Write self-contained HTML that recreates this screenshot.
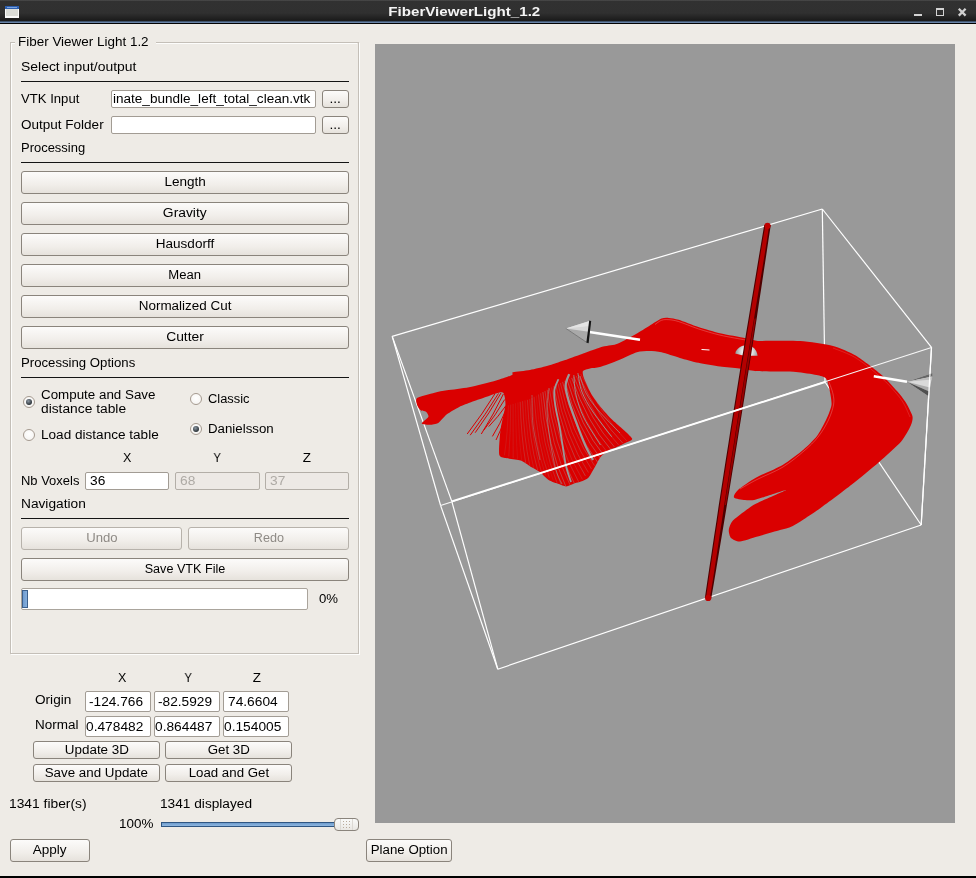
<!DOCTYPE html>
<html><head><meta charset="utf-8"><style>
html,body{margin:0;padding:0;}
body{width:976px;height:878px;position:relative;overflow:hidden;background:#eeebe6;font-family:"Liberation Sans",sans-serif;}
.t{position:absolute;white-space:nowrap;will-change:transform;}
.r{position:absolute;}
</style></head><body>
<div class="r" style="left:0px;top:0px;width:976px;height:24px;background:linear-gradient(#444 0px,#454545 1px,#313131 1px,#303030 13px,#1c1c1c 20px,#1b1b1b 21px,#3f536d 21px,#3f536d 22px,#6882a6 22px,#6882a6 23px,#030303 23px,#000 24px)"></div>
<div class="t" style="left:398.74px;top:5.20px;font-size:13px;line-height:13px;color:#f4f4f4;font-weight:bold;transform:scaleX(1.1646);transform-origin:50% 0">FiberViewerLight_1.2</div>
<div class="r" style="left:5px;top:6px;width:14px;height:12px;background:#fafafa"></div>
<div class="r" style="left:6px;top:9px;width:12px;height:7px;background:#dcddd8"></div>
<div class="r" style="left:5px;top:6px;width:14px;height:3px;background:#2c5eae"></div>
<div class="r" style="left:7px;top:7px;width:10px;height:1px;background:#79a2df"></div>
<div class="r" style="left:914px;top:14px;width:8px;height:2px;background:#d4d4d4"></div>
<div class="r" style="left:936px;top:8px;width:8px;height:8px;box-sizing:border-box;border:1px solid #d4d4d4;border-top:2px solid #d4d4d4"></div>
<svg class="r" style="left:957px;top:7px" width="11" height="11"><path d="M1.8 1.8 L8.6 8.6 M8.6 1.8 L1.8 8.6" stroke="#d0d0d0" stroke-width="2.3" stroke-linecap="butt"/></svg>
<div class="r" style="left:10px;top:42px;width:349px;height:612px;box-sizing:border-box;border:1px solid #c4bfb8;border-right-color:#c4bfb8"></div>
<div class="r" style="left:11px;top:43px;width:349px;height:612px;box-sizing:border-box;border:1px solid #fdfdfc;border-left:none;border-top:none"></div>
<div class="r" style="left:11px;top:43px;width:1px;height:610px;background:#fdfdfc"></div>
<div class="r" style="left:11px;top:43px;width:346px;height:1px;background:#fdfdfc"></div>
<div class="r" style="left:15px;top:34px;width:141px;height:14px;background:#eeebe6"></div>
<div class="t" style="left:17.60px;top:36.42px;font-size:12.5px;line-height:12.5px;color:#000;font-weight:normal;transform:scaleX(1.0761);transform-origin:0 0">Fiber Viewer Light 1.2</div>
<div class="t" style="left:20.60px;top:61.42px;font-size:12.5px;line-height:12.5px;color:#000;font-weight:normal;transform:scaleX(1.1142);transform-origin:0 0">Select input/output</div>
<div class="r" style="left:21px;top:81px;width:328px;height:1px;background:#141414"></div>
<div class="t" style="left:20.60px;top:93.42px;font-size:12.5px;line-height:12.5px;color:#000;font-weight:normal;transform:scaleX(1.0491);transform-origin:0 0">VTK Input</div>
<div class="r" style="left:111px;top:90px;width:205px;height:18px;box-sizing:border-box;border:1px solid #a29c94;border-radius:2px;background:#fff"></div>
<div class="t" style="left:112.60px;top:93.42px;font-size:12.5px;line-height:12.5px;color:#000;font-weight:normal;transform:scaleX(1.0837);transform-origin:0 0">inate_bundle_left_total_clean.vtk</div>
<div class="r" style="left:322px;top:90px;width:27px;height:18px;box-sizing:border-box;border:1px solid #8a847c;border-radius:3px;background:linear-gradient(#fcfbfa,#f1eeea 60%,#e6e2dc)"></div>
<div class="t" style="left:330.29px;top:93.42px;font-size:12.5px;line-height:12.5px;color:#000;font-weight:normal;transform:scaleX(1.0979);transform-origin:50% 0">...</div>
<div class="t" style="left:20.60px;top:119.42px;font-size:12.5px;line-height:12.5px;color:#000;font-weight:normal;transform:scaleX(1.0812);transform-origin:0 0">Output Folder</div>
<div class="r" style="left:111px;top:116px;width:205px;height:18px;box-sizing:border-box;border:1px solid #a29c94;border-radius:2px;background:#fff"></div>
<div class="r" style="left:322px;top:116px;width:27px;height:18px;box-sizing:border-box;border:1px solid #8a847c;border-radius:3px;background:linear-gradient(#fcfbfa,#f1eeea 60%,#e6e2dc)"></div>
<div class="t" style="left:330.29px;top:119.42px;font-size:12.5px;line-height:12.5px;color:#000;font-weight:normal;transform:scaleX(1.0979);transform-origin:50% 0">...</div>
<div class="t" style="left:20.60px;top:142.42px;font-size:12.5px;line-height:12.5px;color:#000;font-weight:normal;transform:scaleX(1.0366);transform-origin:0 0">Processing</div>
<div class="r" style="left:21px;top:162px;width:328px;height:1px;background:#141414"></div>
<div class="r" style="left:21px;top:171px;width:328px;height:23px;box-sizing:border-box;border:1px solid #8a847c;border-radius:3px;background:linear-gradient(#fcfbfa,#f1eeea 60%,#e6e2dc)"></div>
<div class="t" style="left:165.89px;top:175.92px;font-size:12.5px;line-height:12.5px;color:#000;font-weight:normal;transform:scaleX(1.0835);transform-origin:50% 0">Length</div>
<div class="r" style="left:21px;top:202px;width:328px;height:23px;box-sizing:border-box;border:1px solid #8a847c;border-radius:3px;background:linear-gradient(#fcfbfa,#f1eeea 60%,#e6e2dc)"></div>
<div class="t" style="left:165.21px;top:206.92px;font-size:12.5px;line-height:12.5px;color:#000;font-weight:normal;transform:scaleX(1.1076);transform-origin:50% 0">Gravity</div>
<div class="r" style="left:21px;top:233px;width:328px;height:23px;box-sizing:border-box;border:1px solid #8a847c;border-radius:3px;background:linear-gradient(#fcfbfa,#f1eeea 60%,#e6e2dc)"></div>
<div class="t" style="left:158.02px;top:237.92px;font-size:12.5px;line-height:12.5px;color:#000;font-weight:normal;transform:scaleX(1.0826);transform-origin:50% 0">Hausdorff</div>
<div class="r" style="left:21px;top:264px;width:328px;height:23px;box-sizing:border-box;border:1px solid #8a847c;border-radius:3px;background:linear-gradient(#fcfbfa,#f1eeea 60%,#e6e2dc)"></div>
<div class="t" style="left:169.37px;top:268.92px;font-size:12.5px;line-height:12.5px;color:#000;font-weight:normal;transform:scaleX(1.0465);transform-origin:50% 0">Mean</div>
<div class="r" style="left:21px;top:295px;width:328px;height:23px;box-sizing:border-box;border:1px solid #8a847c;border-radius:3px;background:linear-gradient(#fcfbfa,#f1eeea 60%,#e6e2dc)"></div>
<div class="t" style="left:141.93px;top:299.92px;font-size:12.5px;line-height:12.5px;color:#000;font-weight:normal;transform:scaleX(1.0748);transform-origin:50% 0">Normalized Cut</div>
<div class="r" style="left:21px;top:326px;width:328px;height:23px;box-sizing:border-box;border:1px solid #8a847c;border-radius:3px;background:linear-gradient(#fcfbfa,#f1eeea 60%,#e6e2dc)"></div>
<div class="t" style="left:167.98px;top:330.92px;font-size:12.5px;line-height:12.5px;color:#000;font-weight:normal;transform:scaleX(1.1082);transform-origin:50% 0">Cutter</div>
<div class="t" style="left:20.60px;top:357.42px;font-size:12.5px;line-height:12.5px;color:#000;font-weight:normal;transform:scaleX(1.0539);transform-origin:0 0">Processing Options</div>
<div class="r" style="left:21px;top:377px;width:328px;height:1px;background:#141414"></div>
<div class="r" style="left:23px;top:396px;width:12px;height:12px;box-sizing:border-box;border:1px solid #a59a90;border-radius:50%;background:radial-gradient(circle at 50% 40%,#fff,#f3f1ee)"></div>
<div class="r" style="left:26px;top:399px;width:6px;height:6px;border-radius:50%;background:radial-gradient(circle at 40% 35%,#8c98a4,#2c3338 70%)"></div>
<div class="t" style="left:40.60px;top:389.42px;font-size:12.5px;line-height:12.5px;color:#000;font-weight:normal;transform:scaleX(1.0695);transform-origin:0 0">Compute and Save</div>
<div class="t" style="left:40.60px;top:403.42px;font-size:12.5px;line-height:12.5px;color:#000;font-weight:normal;transform:scaleX(1.1030);transform-origin:0 0">distance table</div>
<div class="r" style="left:23px;top:429px;width:12px;height:12px;box-sizing:border-box;border:1px solid #a59a90;border-radius:50%;background:radial-gradient(circle at 50% 40%,#fff,#f3f1ee)"></div>
<div class="t" style="left:40.60px;top:429.42px;font-size:12.5px;line-height:12.5px;color:#000;font-weight:normal;transform:scaleX(1.0857);transform-origin:0 0">Load distance table</div>
<div class="r" style="left:190px;top:393px;width:12px;height:12px;box-sizing:border-box;border:1px solid #a59a90;border-radius:50%;background:radial-gradient(circle at 50% 40%,#fff,#f3f1ee)"></div>
<div class="t" style="left:207.60px;top:393.42px;font-size:12.5px;line-height:12.5px;color:#000;font-weight:normal;transform:scaleX(1.0298);transform-origin:0 0">Classic</div>
<div class="r" style="left:190px;top:423px;width:12px;height:12px;box-sizing:border-box;border:1px solid #a59a90;border-radius:50%;background:radial-gradient(circle at 50% 40%,#fff,#f3f1ee)"></div>
<div class="r" style="left:193px;top:426px;width:6px;height:6px;border-radius:50%;background:radial-gradient(circle at 40% 35%,#8c98a4,#2c3338 70%)"></div>
<div class="t" style="left:207.60px;top:423.42px;font-size:12.5px;line-height:12.5px;color:#000;font-weight:normal;transform:scaleX(1.0625);transform-origin:0 0">Danielsson</div>
<div class="t" style="left:122.83px;top:452.42px;font-size:12.5px;line-height:12.5px;color:#000;font-weight:normal;transform:scaleX(0.9857);transform-origin:50% 0">X</div>
<div class="t" style="left:212.83px;top:452.42px;font-size:12.5px;line-height:12.5px;color:#000;font-weight:normal;transform:scaleX(0.8789);transform-origin:50% 0">Y</div>
<div class="t" style="left:303.18px;top:452.42px;font-size:12.5px;line-height:12.5px;color:#000;font-weight:normal;transform:scaleX(1.0765);transform-origin:50% 0">Z</div>
<div class="t" style="left:20.60px;top:475.42px;font-size:12.5px;line-height:12.5px;color:#000;font-weight:normal;transform:scaleX(1.0370);transform-origin:0 0">Nb Voxels</div>
<div class="r" style="left:85px;top:472px;width:84px;height:18px;box-sizing:border-box;border:1px solid #a29c94;border-radius:2px;background:#fff"></div>
<div class="t" style="left:89.60px;top:475.42px;font-size:12.5px;line-height:12.5px;color:#000;font-weight:normal;transform:scaleX(1.0992);transform-origin:0 0">36</div>
<div class="r" style="left:175px;top:472px;width:85px;height:18px;box-sizing:border-box;border:1px solid #b3aea7;border-radius:2px;background:#ede9e5"></div>
<div class="t" style="left:179.60px;top:475.42px;font-size:12.5px;line-height:12.5px;color:#aeaaa5;font-weight:normal;transform:scaleX(1.0992);transform-origin:0 0">68</div>
<div class="r" style="left:265px;top:472px;width:84px;height:18px;box-sizing:border-box;border:1px solid #b3aea7;border-radius:2px;background:#ede9e5"></div>
<div class="t" style="left:269.60px;top:475.42px;font-size:12.5px;line-height:12.5px;color:#aeaaa5;font-weight:normal;transform:scaleX(1.0992);transform-origin:0 0">37</div>
<div class="t" style="left:20.60px;top:498.42px;font-size:12.5px;line-height:12.5px;color:#000;font-weight:normal;transform:scaleX(1.0963);transform-origin:0 0">Navigation</div>
<div class="r" style="left:21px;top:518px;width:328px;height:1px;background:#141414"></div>
<div class="r" style="left:21px;top:527px;width:161px;height:23px;box-sizing:border-box;border:1px solid #b7b2ab;border-radius:3px;background:linear-gradient(#fcfbfa,#f1eeea 60%,#e6e2dc)"></div>
<div class="t" style="left:86.56px;top:531.92px;font-size:12.5px;line-height:12.5px;color:#8e8a85;font-weight:normal;transform:scaleX(1.0495);transform-origin:50% 0">Undo</div>
<div class="r" style="left:188px;top:527px;width:161px;height:23px;box-sizing:border-box;border:1px solid #b7b2ab;border-radius:3px;background:linear-gradient(#fcfbfa,#f1eeea 60%,#e6e2dc)"></div>
<div class="t" style="left:253.56px;top:531.92px;font-size:12.5px;line-height:12.5px;color:#8e8a85;font-weight:normal;transform:scaleX(1.0097);transform-origin:50% 0">Redo</div>
<div class="r" style="left:21px;top:558px;width:328px;height:23px;box-sizing:border-box;border:1px solid #8a847c;border-radius:3px;background:linear-gradient(#fcfbfa,#f1eeea 60%,#e6e2dc)"></div>
<div class="t" style="left:145.06px;top:562.92px;font-size:12.5px;line-height:12.5px;color:#000;font-weight:normal;transform:scaleX(1.0089);transform-origin:50% 0">Save VTK File</div>
<div class="r" style="left:21px;top:588px;width:287px;height:22px;box-sizing:border-box;border:1px solid #aaa49c;border-radius:2px;background:#fff"></div>
<div class="r" style="left:22px;top:590px;width:6px;height:18px;box-sizing:border-box;border:1px solid #3b5f8c;background:linear-gradient(90deg,#6f9bcf,#86afdc)"></div>
<div class="t" style="left:318.60px;top:593.42px;font-size:12.5px;line-height:12.5px;color:#000;font-weight:normal;transform:scaleX(1.0543);transform-origin:0 0">0%</div>
<div class="t" style="left:117.83px;top:672.42px;font-size:12.5px;line-height:12.5px;color:#000;font-weight:normal;transform:scaleX(0.9857);transform-origin:50% 0">X</div>
<div class="t" style="left:183.83px;top:672.42px;font-size:12.5px;line-height:12.5px;color:#000;font-weight:normal;transform:scaleX(0.8789);transform-origin:50% 0">Y</div>
<div class="t" style="left:253.18px;top:672.42px;font-size:12.5px;line-height:12.5px;color:#000;font-weight:normal;transform:scaleX(1.0765);transform-origin:50% 0">Z</div>
<div class="t" style="left:34.60px;top:694.42px;font-size:12.5px;line-height:12.5px;color:#000;font-weight:normal;transform:scaleX(1.0882);transform-origin:0 0">Origin</div>
<div class="t" style="left:34.60px;top:719.42px;font-size:12.5px;line-height:12.5px;color:#000;font-weight:normal;transform:scaleX(1.0784);transform-origin:0 0">Normal</div>
<div class="r" style="left:85px;top:691px;width:66px;height:21px;box-sizing:border-box;border:1px solid #a29c94;border-radius:2px;background:#fff"></div>
<div class="t" style="left:88.60px;top:695.92px;font-size:12.5px;line-height:12.5px;color:#000;font-weight:normal;transform:scaleX(1.0941);transform-origin:0 0">-124.766</div>
<div class="r" style="left:154px;top:691px;width:66px;height:21px;box-sizing:border-box;border:1px solid #a29c94;border-radius:2px;background:#fff"></div>
<div class="t" style="left:157.60px;top:695.92px;font-size:12.5px;line-height:12.5px;color:#000;font-weight:normal;transform:scaleX(1.0941);transform-origin:0 0">-82.5929</div>
<div class="r" style="left:223px;top:691px;width:66px;height:21px;box-sizing:border-box;border:1px solid #a29c94;border-radius:2px;background:#fff"></div>
<div class="t" style="left:227.60px;top:695.92px;font-size:12.5px;line-height:12.5px;color:#000;font-weight:normal;transform:scaleX(1.0991);transform-origin:0 0">74.6604</div>
<div class="r" style="left:85px;top:716px;width:66px;height:21px;box-sizing:border-box;border:1px solid #a29c94;border-radius:2px;background:#fff"></div>
<div class="t" style="left:85.60px;top:720.92px;font-size:12.5px;line-height:12.5px;color:#000;font-weight:normal;transform:scaleX(1.0991);transform-origin:0 0">0.478482</div>
<div class="r" style="left:154px;top:716px;width:66px;height:21px;box-sizing:border-box;border:1px solid #a29c94;border-radius:2px;background:#fff"></div>
<div class="t" style="left:154.60px;top:720.92px;font-size:12.5px;line-height:12.5px;color:#000;font-weight:normal;transform:scaleX(1.0991);transform-origin:0 0">0.864487</div>
<div class="r" style="left:223px;top:716px;width:66px;height:21px;box-sizing:border-box;border:1px solid #a29c94;border-radius:2px;background:#fff"></div>
<div class="t" style="left:223.60px;top:720.92px;font-size:12.5px;line-height:12.5px;color:#000;font-weight:normal;transform:scaleX(1.0991);transform-origin:0 0">0.154005</div>
<div class="r" style="left:33px;top:741px;width:127px;height:18px;box-sizing:border-box;border:1px solid #8a847c;border-radius:3px;background:linear-gradient(#fcfbfa,#f1eeea 60%,#e6e2dc)"></div>
<div class="t" style="left:66.62px;top:744.42px;font-size:12.5px;line-height:12.5px;color:#000;font-weight:normal;transform:scaleX(1.0739);transform-origin:50% 0">Update 3D</div>
<div class="r" style="left:165px;top:741px;width:127px;height:18px;box-sizing:border-box;border:1px solid #8a847c;border-radius:3px;background:linear-gradient(#fcfbfa,#f1eeea 60%,#e6e2dc)"></div>
<div class="t" style="left:208.70px;top:744.42px;font-size:12.5px;line-height:12.5px;color:#000;font-weight:normal;transform:scaleX(1.0626);transform-origin:50% 0">Get 3D</div>
<div class="r" style="left:33px;top:764px;width:127px;height:18px;box-sizing:border-box;border:1px solid #8a847c;border-radius:3px;background:linear-gradient(#fcfbfa,#f1eeea 60%,#e6e2dc)"></div>
<div class="t" style="left:48.20px;top:767.42px;font-size:12.5px;line-height:12.5px;color:#000;font-weight:normal;transform:scaleX(1.0683);transform-origin:50% 0">Save and Update</div>
<div class="r" style="left:165px;top:764px;width:127px;height:18px;box-sizing:border-box;border:1px solid #8a847c;border-radius:3px;background:linear-gradient(#fcfbfa,#f1eeea 60%,#e6e2dc)"></div>
<div class="t" style="left:190.62px;top:767.42px;font-size:12.5px;line-height:12.5px;color:#000;font-weight:normal;transform:scaleX(1.0617);transform-origin:50% 0">Load and Get</div>
<div class="t" style="left:9.10px;top:798.42px;font-size:12.5px;line-height:12.5px;color:#000;font-weight:normal;transform:scaleX(1.1047);transform-origin:0 0">1341 fiber(s)</div>
<div class="t" style="left:159.60px;top:798.42px;font-size:12.5px;line-height:12.5px;color:#000;font-weight:normal;transform:scaleX(1.0943);transform-origin:0 0">1341 displayed</div>
<div class="t" style="left:119.10px;top:818.42px;font-size:12.5px;line-height:12.5px;color:#000;font-weight:normal;transform:scaleX(1.0738);transform-origin:0 0">100%</div>
<div class="r" style="left:161px;top:822px;width:175px;height:5px;box-sizing:border-box;border-top:1px solid #2f5682;border-bottom:1px solid #2f5682;border-left:1px solid #2f5682;background:linear-gradient(#6e9ccd,#8fb7e0)"></div>
<div class="r" style="left:334px;top:818px;width:25px;height:13px;box-sizing:border-box;border:1px solid #8a847c;border-radius:4px;background:linear-gradient(#fafaf9,#e9e7e3)"></div>
<div class="r" style="left:340px;top:819px;width:1px;height:11px;background:#dcd9d4"></div>
<div class="r" style="left:352px;top:819px;width:1px;height:11px;background:#dcd9d4"></div>
<div class="r" style="left:343px;top:821px;width:1px;height:1px;background:#b9ab9b"></div>
<div class="r" style="left:343px;top:824px;width:1px;height:1px;background:#b9ab9b"></div>
<div class="r" style="left:343px;top:827px;width:1px;height:1px;background:#b9ab9b"></div>
<div class="r" style="left:346px;top:821px;width:1px;height:1px;background:#b9ab9b"></div>
<div class="r" style="left:346px;top:824px;width:1px;height:1px;background:#b9ab9b"></div>
<div class="r" style="left:346px;top:827px;width:1px;height:1px;background:#b9ab9b"></div>
<div class="r" style="left:349px;top:821px;width:1px;height:1px;background:#b9ab9b"></div>
<div class="r" style="left:349px;top:824px;width:1px;height:1px;background:#b9ab9b"></div>
<div class="r" style="left:349px;top:827px;width:1px;height:1px;background:#b9ab9b"></div>
<div class="r" style="left:10px;top:839px;width:80px;height:23px;box-sizing:border-box;border:1px solid #8a847c;border-radius:3px;background:linear-gradient(#fcfbfa,#f1eeea 60%,#e6e2dc)"></div>
<div class="t" style="left:34.37px;top:843.92px;font-size:12.5px;line-height:12.5px;color:#000;font-weight:normal;transform:scaleX(1.0839);transform-origin:50% 0">Apply</div>
<div class="r" style="left:366px;top:839px;width:86px;height:23px;box-sizing:border-box;border:1px solid #8a847c;border-radius:3px;background:linear-gradient(#fcfbfa,#f1eeea 60%,#e6e2dc)"></div>
<div class="t" style="left:372.87px;top:843.92px;font-size:12.5px;line-height:12.5px;color:#000;font-weight:normal;transform:scaleX(1.0627);transform-origin:50% 0">Plane Option</div>
<div class="r" style="left:0px;top:876px;width:976px;height:2px;background:#000"></div>
<div class="r" style="left:375px;top:44px;width:580px;height:779px;background:#999;overflow:hidden">
<svg width="580" height="779" style="position:absolute;left:0;top:0">
<defs><linearGradient id="hg" x1="0" x2="1" y1="0" y2="0.2"><stop offset="0" stop-color="#5e5e5e"/><stop offset="0.45" stop-color="#bdbdbd"/><stop offset="0.75" stop-color="#f5f5f5"/><stop offset="1" stop-color="#ffffff"/></linearGradient><radialGradient id="hr" cx="747" cy="352" r="12" gradientUnits="userSpaceOnUse"><stop offset="0" stop-color="#ffffff"/><stop offset="0.45" stop-color="#e6e6e6"/><stop offset="1" stop-color="#8c9494"/></radialGradient><linearGradient id="cg" x1="0" x2="0" y1="0" y2="1"><stop offset="0" stop-color="#e8e8e8"/><stop offset="0.5" stop-color="#d2d2d2"/><stop offset="1" stop-color="#8c8c8c"/></linearGradient></defs>
<g transform="translate(-375,-44)">
<g stroke="#ffffff" stroke-width="1.2" fill="none">
<line x1="392.2" y1="336.4" x2="822.3" y2="209"/>
<line x1="822.3" y1="209" x2="931.5" y2="347.4"/>
<line x1="822.3" y1="209" x2="825" y2="382"/>
<line x1="825" y1="382" x2="921.2" y2="525"/>
<line x1="392.2" y1="336.4" x2="440.6" y2="505.5"/>
<line x1="440.6" y1="505.5" x2="497.8" y2="669.2"/>
<line x1="392.2" y1="336.4" x2="451.8" y2="501.4"/>
<line x1="451.8" y1="501.4" x2="497.8" y2="669.2"/>
<line x1="921.2" y1="525" x2="497.8" y2="669.2"/>
<line x1="931.5" y1="347.4" x2="921.2" y2="525"/>
</g>
<path d="M417.0,398.0 C419.0,396.5 431.1,393.6 434.6,392.7 C438.1,391.8 442.9,390.9 446.9,390.3 C450.9,389.7 463.3,388.3 469.0,387.2 C474.7,386.1 491.1,381.9 496.1,380.5 C501.1,379.1 510.0,375.9 512.0,374.9 C514.0,373.9 510.9,372.9 513.0,372.3 C515.1,371.7 526.0,370.8 530.0,370.0 C534.0,369.2 543.6,367.0 547.7,365.8 C551.8,364.6 559.1,362.1 565.2,360.0 C571.3,357.9 594.1,349.2 600.0,347.4 C605.9,345.6 612.4,345.5 616.0,344.3 C619.6,343.1 626.8,339.1 630.7,337.0 C634.6,334.9 645.6,328.1 649.2,325.9 C652.8,323.7 659.2,319.4 661.5,318.5 C663.8,317.6 666.9,317.7 668.9,317.9 C670.9,318.1 675.3,318.7 678.7,319.8 C682.1,320.9 693.6,325.5 698.4,327.1 C703.2,328.7 714.5,332.0 720.0,333.3 C725.5,334.6 741.3,337.3 745.7,338.2 C750.1,339.1 754.9,340.7 757.7,341.0 C760.5,341.3 765.0,340.7 770.0,340.7 C775.0,340.7 792.9,340.4 800.3,341.0 C807.7,341.6 826.6,344.2 833.1,345.9 C839.6,347.6 850.4,352.3 856.1,355.7 C861.8,359.1 877.5,371.3 882.3,375.4 C887.1,379.5 894.3,387.9 897.0,391.0 C899.7,394.1 903.4,398.7 905.2,401.6 C907.0,404.5 911.7,413.2 912.4,416.0 C913.1,418.8 912.1,422.5 910.8,425.5 C909.5,428.5 904.9,437.2 901.2,441.5 C897.5,445.8 884.7,457.2 878.9,462.2 C873.1,467.2 858.7,479.1 851.8,484.5 C844.9,489.9 826.8,503.6 819.9,508.4 C813.0,513.2 797.5,523.5 792.8,526.0 C788.1,528.5 784.1,528.8 780.0,530.0 C775.9,531.2 762.3,535.2 757.6,536.5 C752.9,537.8 743.1,541.3 740.0,541.5 C736.9,541.7 732.3,539.3 731.0,538.0 C729.7,536.7 728.6,532.0 728.8,530.0 C729.0,528.0 730.6,523.2 732.5,521.0 C734.4,518.8 742.2,513.0 745.0,511.0 C747.8,509.0 751.5,505.9 756.3,503.5 C761.1,501.1 786.0,490.5 786.0,490.0 C786.0,489.5 760.8,498.3 756.0,499.5 C751.2,500.7 747.6,500.3 745.0,500.1 C742.4,499.9 734.8,498.7 734.0,497.5 C733.2,496.3 735.4,492.3 738.0,490.0 C740.6,487.7 751.1,480.5 756.3,477.6 C761.5,474.7 777.1,468.3 782.6,465.0 C788.1,461.7 799.6,452.9 803.6,449.5 C807.6,446.1 814.4,439.4 817.0,436.0 C819.6,432.6 824.3,423.6 826.0,420.0 C827.7,416.4 831.1,408.3 831.5,404.9 C831.9,401.5 830.4,394.1 829.8,391.0 C829.2,387.9 827.6,380.4 826.0,378.5 C824.4,376.6 820.0,375.9 816.5,375.1 C813.0,374.3 801.4,372.4 796.0,372.0 C790.6,371.6 774.8,371.6 770.0,371.5 C765.2,371.4 758.6,371.4 755.0,371.0 C751.4,370.6 743.3,369.0 739.2,368.5 C735.1,368.0 724.8,367.2 720.0,366.5 C715.2,365.8 703.1,363.8 698.4,362.8 C693.7,361.8 684.2,359.1 679.9,357.9 C675.6,356.7 665.1,353.1 661.5,352.3 C657.9,351.5 652.1,351.1 649.2,351.1 C646.3,351.1 640.5,351.2 636.9,352.3 C633.3,353.4 622.7,358.6 618.4,360.3 C614.1,362.0 603.3,366.1 600.0,367.1 C596.7,368.1 592.0,368.0 590.0,368.5 C588.0,369.0 583.7,370.0 583.0,371.1 C582.3,372.2 583.0,375.7 584.0,378.3 C585.0,380.9 589.2,390.2 591.2,393.7 C593.2,397.2 599.1,405.0 601.5,408.0 C603.9,411.0 609.3,416.9 611.7,419.3 C614.1,421.7 619.6,426.2 622.0,428.5 C624.4,430.8 631.9,437.1 632.2,438.8 C632.6,440.5 626.9,442.0 625.0,443.0 C623.1,444.0 617.8,446.7 616.0,447.5 C614.2,448.3 611.8,448.4 610.0,449.5 C608.2,450.6 602.4,455.0 600.7,456.9 C599.0,458.8 597.1,463.1 595.7,465.5 C594.3,467.9 590.1,475.9 588.4,477.8 C586.7,479.7 582.6,480.9 581.0,481.5 C579.4,482.1 576.5,482.7 574.8,483.3 C573.1,483.9 568.1,486.3 566.2,486.4 C564.3,486.5 560.9,484.7 558.9,484.0 C556.9,483.3 551.3,481.6 549.0,480.2 C546.7,478.8 541.3,473.2 539.2,471.6 C537.1,470.0 532.8,468.0 530.6,466.7 C528.4,465.4 523.6,461.6 520.7,460.6 C517.8,459.6 508.5,458.8 506.0,458.1 C503.5,457.4 499.8,457.7 499.2,454.4 C498.6,451.1 499.8,435.7 500.5,430.0 C501.2,424.3 505.1,409.6 505.4,405.3 C505.7,401.0 504.5,394.4 503.4,393.0 C502.3,391.6 498.4,392.9 496.1,393.4 C493.8,393.9 486.7,396.7 483.8,397.7 C480.9,398.7 474.4,400.9 471.5,402.0 C468.6,403.1 462.1,405.5 459.2,406.9 C456.3,408.3 449.3,412.4 446.9,414.3 C444.5,416.2 440.3,421.7 438.3,422.9 C436.3,424.1 431.6,424.6 429.7,424.7 C427.8,424.8 421.9,424.4 421.7,423.5 C421.5,422.6 427.9,418.1 428.4,416.7 C428.9,415.3 426.9,412.5 426.0,411.8 C425.1,411.1 422.1,411.3 421.1,410.6 C420.1,409.9 417.9,407.2 417.4,405.7 C416.9,404.2 415.0,399.5 417.0,398.0Z" fill="#da0000"/>
<g stroke="#da0000" stroke-width="1" fill="none">
<path d="M494.8,394 Q482.5,414.0 467.2,434"/>
<path d="M498.5,393.4 Q485.9,414.3 470.2,435.2"/>
<path d="M501,393 Q489.6,412.9 475.2,432.7"/>
<path d="M503.4,394 Q493.9,414.0 481.3,434"/>
<path d="M504.7,399.5 Q495.8,414.9 483.8,430.2"/>
<path d="M505.9,405.7 Q498.8,416.1 488.7,426.6"/>
<path d="M505.9,410 Q500.6,423.2 492.4,436.4"/>
<path d="M505.5,416 Q502.2,428.0 496,440"/>
</g>
<path d="M558.4,379.3 C557.7,381.2 554.8,386.2 554.3,390.6 C553.8,395.1 554.5,400.0 555.4,406.0 C556.3,412.0 558.3,420.0 559.5,426.5 C560.7,433.0 561.4,438.4 562.5,445.0 C563.6,451.6 564.6,459.8 566.0,466.0 C567.4,472.2 570.2,479.3 571.0,482.0" stroke="#999999" stroke-width="1.8" fill="none"/>
<path d="M569.2,374.2 C568.6,376.1 565.7,381.1 565.6,385.5 C565.5,389.9 567.0,394.9 568.7,400.9 C570.4,406.9 573.2,414.0 575.9,421.4 C578.6,428.8 582.2,438.6 585.1,445.0 C588.0,451.4 591.7,457.5 593.0,460.0" stroke="#999999" stroke-width="2.2" fill="none"/>
<path d="M573.8,375.2 C574.2,378.5 574.3,387.9 576.0,395.0 C577.7,402.1 579.9,409.7 584.0,418.0 C588.1,426.3 597.8,440.5 600.5,445.0" stroke="#999999" stroke-width="0.9" fill="none"/>
<path d="M577.9,373.2 C578.6,376.3 579.5,385.5 582.0,392.0 C584.5,398.5 588.0,404.6 593.0,412.0 C598.0,419.4 608.6,432.6 611.7,436.7" stroke="#999999" stroke-width="0.9" fill="none"/>
<path d="M580.0,376.0 C581.0,378.8 583.0,387.3 586.0,393.0 C589.0,398.7 592.3,403.3 598.0,410.0 C603.7,416.7 616.3,429.2 620.0,433.0" stroke="#999999" stroke-width="0.7" fill="none"/>
<path d="M549.0,388.0 C548.7,391.7 546.8,401.3 547.0,410.0 C547.2,418.7 548.5,430.0 550.0,440.0 C551.5,450.0 554.0,462.7 556.0,470.0 C558.0,477.3 561.0,481.7 562.0,484.0" stroke="#999999" stroke-width="0.6" fill="none"/>
<path d="M532.0,395.0 C532.2,400.0 531.7,414.2 533.0,425.0 C534.3,435.8 538.8,454.2 540.0,460.0" stroke="#999999" stroke-width="0.5" fill="none"/>
<path d="M508.4,405.3 Q507.8,433.0 504.4,455.3" stroke="#a0a0a0" stroke-width="0.72" opacity="0.18" fill="none"/>
<path d="M510.7,404.6 Q510.5,433.5 508.8,456.6" stroke="#a0a0a0" stroke-width="0.74" opacity="0.21" fill="none"/>
<path d="M513.1,403.9 Q513.1,434.1 513.2,458.0" stroke="#a0a0a0" stroke-width="0.53" opacity="0.28" fill="none"/>
<path d="M515.5,403.2 Q515.8,434.7 517.6,459.3" stroke="#a0a0a0" stroke-width="0.83" opacity="0.12" fill="none"/>
<path d="M517.9,402.5 Q518.5,435.6 521.8,461.0" stroke="#a0a0a0" stroke-width="0.59" opacity="0.18" fill="none"/>
<path d="M520.2,401.8 Q521.1,436.8 525.8,463.4" stroke="#a0a0a0" stroke-width="0.69" opacity="0.37" fill="none"/>
<path d="M522.6,401.2 Q523.8,438.0 529.8,465.7" stroke="#a0a0a0" stroke-width="0.69" opacity="0.33" fill="none"/>
<path d="M525.0,400.5 Q526.5,439.2 533.7,468.0" stroke="#a0a0a0" stroke-width="0.56" opacity="0.28" fill="none"/>
<path d="M527.4,399.8 Q529.2,440.4 537.7,470.3" stroke="#a0a0a0" stroke-width="0.85" opacity="0.28" fill="none"/>
<path d="M529.7,399.1 Q531.9,441.7 541.6,472.7" stroke="#a0a0a0" stroke-width="0.80" opacity="0.25" fill="none"/>
<path d="M531.9,398.0 Q534.5,442.9 545.5,475.2" stroke="#a0a0a0" stroke-width="0.53" opacity="0.29" fill="none"/>
<path d="M534.1,396.8 Q537.1,444.2 549.3,477.7" stroke="#a0a0a0" stroke-width="0.74" opacity="0.31" fill="none"/>
<path d="M536.3,395.6 Q539.7,445.4 553.2,480.2" stroke="#a0a0a0" stroke-width="0.51" opacity="0.20" fill="none"/>
<path d="M538.5,394.5 Q542.4,446.6 557.0,482.7" stroke="#a0a0a0" stroke-width="0.69" opacity="0.34" fill="none"/>
<path d="M540.7,393.3 Q545.1,447.6 561.2,484.6" stroke="#a0a0a0" stroke-width="0.85" opacity="0.30" fill="none"/>
<path d="M542.9,392.1 Q548.0,448.1 565.6,485.9" stroke="#a0a0a0" stroke-width="0.87" opacity="0.48" fill="none"/>
<path d="M545.0,391.0 Q550.9,447.2 569.9,484.7" stroke="#a0a0a0" stroke-width="0.82" opacity="0.40" fill="none"/>
<path d="M547.2,389.8 Q553.9,446.1 574.3,483.2" stroke="#a0a0a0" stroke-width="0.87" opacity="0.41" fill="none"/>
<path d="M549.4,388.7 Q557.0,445.1 578.7,481.8" stroke="#a0a0a0" stroke-width="0.54" opacity="0.52" fill="none"/>
<path d="M551.6,387.5 Q559.9,443.4 582.4,479.4" stroke="#a0a0a0" stroke-width="0.59" opacity="0.33" fill="none"/>
<path d="M553.8,386.3 Q562.7,441.2 585.4,475.9" stroke="#a0a0a0" stroke-width="0.67" opacity="0.54" fill="none"/>
<path d="M555.9,385.2 Q565.6,438.8 588.4,472.5" stroke="#a0a0a0" stroke-width="0.62" opacity="0.46" fill="none"/>
<path d="M558.1,384.0 Q568.5,436.5 591.5,469.0" stroke="#a0a0a0" stroke-width="0.65" opacity="0.43" fill="none"/>
<path d="M560.3,382.9 Q571.4,434.2 594.5,465.6" stroke="#a0a0a0" stroke-width="0.73" opacity="0.39" fill="none"/>
<path d="M562.6,381.9 Q574.5,432.0 597.6,462.2" stroke="#a0a0a0" stroke-width="0.86" opacity="0.45" fill="none"/>
<path d="M564.9,380.9 Q577.6,429.7 600.8,458.8" stroke="#a0a0a0" stroke-width="0.87" opacity="0.47" fill="none"/>
<path d="M567.1,379.9 Q580.8,427.5 603.9,455.5" stroke="#a0a0a0" stroke-width="0.90" opacity="0.51" fill="none"/>
<path d="M569.4,378.9 Q584.0,425.2 607.1,452.1" stroke="#a0a0a0" stroke-width="0.57" opacity="0.47" fill="none"/>
<path d="M571.7,377.9 Q587.3,423.0 610.3,448.9" stroke="#a0a0a0" stroke-width="0.89" opacity="0.52" fill="none"/>
<path d="M573.9,376.9 Q591.0,421.6 614.4,446.9" stroke="#a0a0a0" stroke-width="0.73" opacity="0.53" fill="none"/>
<path d="M576.2,376.0 Q594.9,420.2 618.6,444.9" stroke="#a0a0a0" stroke-width="0.58" opacity="0.48" fill="none"/>
<path d="M578.5,375.0 Q598.8,418.8 622.7,443.0" stroke="#a0a0a0" stroke-width="0.73" opacity="0.51" fill="none"/>
<path d="M580.7,374.0 Q602.9,417.3 626.9,441.0" stroke="#a0a0a0" stroke-width="0.53" opacity="0.37" fill="none"/>
<path d="M655.0,324.5 C656.1,323.8 659.2,321.1 661.5,320.3 C663.8,319.5 666.0,319.5 668.9,319.7 C671.8,319.9 673.8,320.1 678.7,321.6 C683.6,323.1 691.5,326.6 698.4,328.9 C705.3,331.1 712.1,333.2 720.0,335.1 C727.9,337.0 741.4,339.2 745.7,340.0" stroke="#f4b0b0" stroke-width="0.6" opacity="0.55" fill="none"/>
<path d="M833.0,348.0 C836.8,349.7 848.0,353.1 856.0,358.0 C864.0,362.9 874.3,371.7 881.0,377.5 C887.7,383.3 892.2,388.6 896.0,393.0 C899.8,397.4 901.7,400.0 904.0,404.0 C906.3,408.0 909.0,414.8 910.0,417.0" stroke="#f4b0b0" stroke-width="0.6" opacity="0.3" fill="none"/>
<path d="M829.0,382.0 C829.7,384.0 832.2,390.2 833.0,394.0 C833.8,397.8 834.3,400.5 833.5,405.0 C832.7,409.5 830.6,415.7 828.0,421.0 C825.4,426.3 822.0,432.0 818.0,437.0 C814.0,442.0 809.8,446.0 804.0,451.0 C798.2,456.0 790.8,462.2 783.0,467.0 C775.2,471.8 764.2,475.8 757.0,479.5 C749.8,483.2 742.8,487.4 740.0,489.0" stroke="#f4b0b0" stroke-width="0.6" opacity="0.55" fill="none"/>
<line x1="701.5" y1="349.5" x2="709.5" y2="350" stroke="#fff" stroke-width="1"/>
<path d="M735.2,353.4 C736.5,348.5 741,345.3 746.8,345.3 C752.5,345.5 756.8,349.5 757.6,355.8 L749,355.8 L742,355.2 Z" fill="url(#hr)"/>
<polygon points="764.2,225.0 761.6,240.6 759.0,256.1 756.4,271.7 753.8,287.2 751.2,302.8 748.6,318.4 746.0,333.9 743.5,349.5 740.9,365.1 738.4,380.6 735.9,396.2 733.4,411.8 730.9,427.3 728.5,442.9 726.0,458.4 723.6,474.0 721.2,489.6 718.8,505.1 716.5,520.7 714.1,536.2 711.8,551.8 709.4,567.4 707.1,582.9 704.8,598.5 711.2,598.5 713.9,582.9 716.5,567.4 719.1,551.8 721.7,536.2 724.3,520.7 726.9,505.1 729.5,489.6 732.0,474.0 734.6,458.4 737.1,442.9 739.6,427.3 742.1,411.8 744.6,396.2 747.0,380.6 749.5,365.1 751.9,349.5 754.3,333.9 756.7,318.4 759.0,302.8 761.4,287.2 763.7,271.7 766.1,256.1 768.4,240.6 770.8,225.0" fill="#4e0000"/>
<polygon points="765.4,225.0 762.7,240.6 760.1,256.1 757.5,271.7 754.9,287.2 752.3,302.8 749.7,318.4 747.1,333.9 744.6,349.5 742.0,365.1 739.5,380.6 737.0,396.2 734.5,411.8 732.0,427.3 729.6,442.9 727.1,458.4 724.7,474.0 722.3,489.6 719.9,505.1 717.6,520.7 715.2,536.2 712.9,551.8 710.5,567.4 708.2,582.9 705.9,598.5 709.8,598.5 712.4,582.9 714.8,567.4 717.2,551.8 719.5,536.2 721.9,520.7 724.2,505.1 726.6,489.6 729.0,474.0 731.4,458.4 733.9,442.9 736.3,427.3 738.8,411.8 741.3,396.2 743.8,380.6 746.3,365.1 748.9,349.5 751.4,333.9 754.0,318.4 756.6,302.8 759.2,287.2 761.8,271.7 764.4,256.1 766.9,240.6 769.2,225.0" fill="#b40000"/>
<polygon points="754.5,318.4 751.9,333.9 749.4,349.5 746.8,365.1 744.3,380.6 741.8,396.2 739.3,411.8 736.8,427.3 734.4,442.9 731.9,458.4 729.5,474.0 727.1,489.6 724.7,505.1 726.0,505.1 728.6,489.6 731.1,474.0 733.7,458.4 736.2,442.9 738.7,427.3 741.2,411.8 743.7,396.2 746.1,380.6 748.6,365.1 751.0,349.5 753.4,333.9 755.8,318.4" fill="#9a0000"/>
<circle cx="767.5" cy="225.8" r="3.1" fill="#c00000"/>
<circle cx="708.2" cy="598" r="3.1" fill="#c00000"/>
<line x1="440.6" y1="505.5" x2="931.5" y2="347.4" stroke="#f8f8f8" stroke-width="1.1"/>
<line x1="451.8" y1="501.4" x2="825" y2="382" stroke="#ffffff" stroke-width="1.9"/>
<line x1="589.3" y1="332" x2="640" y2="339.7" stroke="#fff" stroke-width="2.6"/>
<polygon points="565.8,328.4 590.3,320.8 587.3,342.8" fill="#d6d6d6"/>
<polygon points="565.8,328.4 588.8,331.8 587.3,342.8" fill="#a9a9a9"/>
<polygon points="565.8,328.4 590.3,320.8 589.6,326" fill="#e4e4e4"/>
<line x1="565.8" y1="328.4" x2="587.3" y2="342.8" stroke="#6a6a6a" stroke-width="0.8"/>
<polygon points="589.2,320.6 591.2,321 588.6,343.2 586.4,342.6" fill="#151515"/>
<line x1="873.8" y1="376.2" x2="907" y2="381.8" stroke="#fff" stroke-width="2.6"/>
<polygon points="907,381.8 932.6,373 928.6,396.2" fill="#dadada"/>
<polygon points="907,381.8 932.6,373 932.3,376.6" fill="#666"/>
<polygon points="907,381.8 932.3,376.6 931.9,379.4" fill="#bcbcbc"/>
<polygon points="907,381.8 929.8,387.5 929.3,391.5" fill="#acacac"/>
<polygon points="907,381.8 929.3,391.5 928.6,396.2" fill="#505050"/>
<line x1="931.5" y1="347.4" x2="921.2" y2="525" stroke="#ffffff" stroke-width="1.2"/>
</g></svg>
</div>
</body></html>
